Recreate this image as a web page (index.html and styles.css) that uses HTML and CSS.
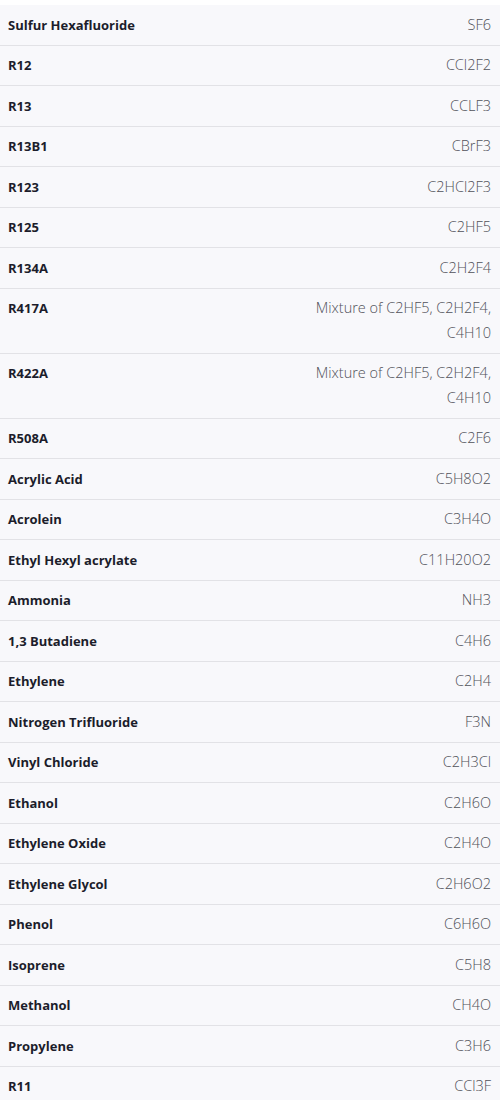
FILE: index.html
```html
<!DOCTYPE html>
<html lang="en">
<head>
    <meta charset="UTF-8">
    <meta name="viewport" content="width=device-width, initial-scale=1.0">
    <title>Gases</title>
    <link rel="stylesheet" href="styles.css">
</head>
<body>

<table class="gas-table">
    <tbody>
        <tr><th>Sulfur Hexafluoride</th><td>SF6</td></tr>
        <tr><th>R12</th><td>CCl2F2</td></tr>
        <tr><th>R13</th><td>CCLF3</td></tr>
        <tr><th>R13B1</th><td>CBrF3</td></tr>
        <tr><th>R123</th><td>C2HCl2F3</td></tr>
        <tr><th>R125</th><td>C2HF5</td></tr>
        <tr><th>R134A</th><td>C2H2F4</td></tr>
        <tr><th>R417A</th><td>Mixture of C2HF5, C2H2F4, C4H10</td></tr>
        <tr><th>R422A</th><td>Mixture of C2HF5, C2H2F4, C4H10</td></tr>
        <tr><th>R508A</th><td>C2F6</td></tr>
        <tr><th>Acrylic Acid</th><td>C5H8O2</td></tr>
        <tr><th>Acrolein</th><td>C3H4O</td></tr>
        <tr><th>Ethyl Hexyl acrylate</th><td>C11H20O2</td></tr>
        <tr><th>Ammonia</th><td>NH3</td></tr>
        <tr><th>1,3 Butadiene</th><td>C4H6</td></tr>
        <tr><th>Ethylene</th><td>C2H4</td></tr>
        <tr><th>Nitrogen Trifluoride</th><td>F3N</td></tr>
        <tr><th>Vinyl Chloride</th><td>C2H3Cl</td></tr>
        <tr><th>Ethanol</th><td>C2H6O</td></tr>
        <tr><th>Ethylene Oxide</th><td>C2H4O</td></tr>
        <tr><th>Ethylene Glycol</th><td>C2H6O2</td></tr>
        <tr><th>Phenol</th><td>C6H6O</td></tr>
        <tr><th>Isoprene</th><td>C5H8</td></tr>
        <tr><th>Methanol</th><td>CH4O</td></tr>
        <tr><th>Propylene</th><td>C3H6</td></tr>
        <tr><th>R11</th><td>CCl3F</td></tr>
    </tbody>
</table>

</body>
</html>
```

FILE: styles.css
```css
body {
    margin: 0;
    background-color: #ffffff;
    font-family: "Open Sans", Arial, sans-serif;
}
.gas-table {
    width: 100%;
    margin-top: 5px;
    border-collapse: collapse;
    background-color: #f8f8fb;
}
.gas-table tr {
    border-bottom: 1px solid #e2e2e6;
}
.gas-table th,
.gas-table td {
    padding: 7.5px 9px 7.5px 8px;
    line-height: 24.5px;
    vertical-align: top;
}
.gas-table th {
    text-align: left;
    font-size: 13px;
    font-weight: 700;
    color: #1c1d2b;
}
.gas-table td {
    width: 185px;
    text-align: right;
    font-size: 14.5px;
    font-weight: 300;
    color: #505159;
}
```
